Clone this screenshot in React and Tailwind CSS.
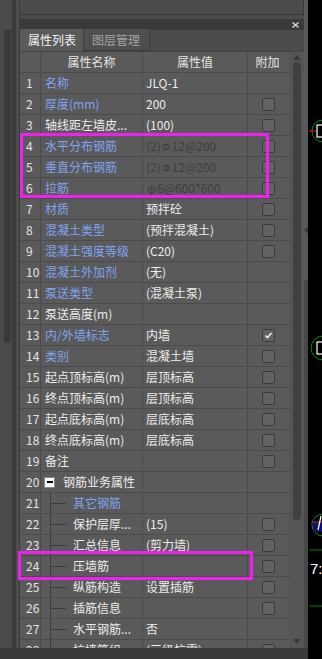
import React from 'react';

const F = { fontFamily: '"Noto Sans CJK SC", "Liberation Sans", sans-serif' };

const Rebar = ({ k }) => (
  <span className="text-[11px] mx-[1px]">{k === 'a' ? 'Φ' : 'ф'}</span>
);

const rows = [
  { n: 1, name: '名称', val: 'JLQ-1', blue: true, cb: false },
  { n: 2, name: '厚度(mm)', val: '200', blue: true, cb: true },
  { n: 3, name: '轴线距左墙皮...', val: '(100)', blue: false, cb: true },
  { n: 4, name: '水平分布钢筋', val: <>(2)<Rebar k="a" />12@200</>, blue: true, cb: true, dim: true },
  { n: 5, name: '垂直分布钢筋', val: <>(2)<Rebar k="a" />12@200</>, blue: true, cb: true, dim: true },
  { n: 6, name: '拉筋', val: <><Rebar k="b" />6@600*600</>, blue: true, cb: true, dim: true },
  { n: 7, name: '材质', val: '预拌砼', blue: true, cb: true },
  { n: 8, name: '混凝土类型', val: '(预拌混凝土)', blue: true, cb: true },
  { n: 9, name: '混凝土强度等级', val: '(C20)', blue: true, cb: true },
  { n: 10, name: '混凝土外加剂', val: '(无)', blue: true, cb: false },
  { n: 11, name: '泵送类型', val: '(混凝土泵)', blue: true, cb: false },
  { n: 12, name: '泵送高度(m)', val: '', blue: false, cb: false },
  { n: 13, name: '内/外墙标志', val: '内墙', blue: true, cb: true, checked: true },
  { n: 14, name: '类别', val: '混凝土墙', blue: true, cb: true },
  { n: 15, name: '起点顶标高(m)', val: '层顶标高', cb: true },
  { n: 16, name: '终点顶标高(m)', val: '层顶标高', cb: true },
  { n: 17, name: '起点底标高(m)', val: '层底标高', cb: true },
  { n: 18, name: '终点底标高(m)', val: '层底标高', cb: true },
  { n: 19, name: '备注', val: '', cb: true },
  { n: 20, name: '钢筋业务属性', val: '', cb: false, group: true },
  { n: 21, name: '其它钢筋', val: '', blue: true, cb: false, child: true },
  { n: 22, name: '保护层厚...', val: '(15)', cb: true, child: true },
  { n: 23, name: '汇总信息', val: '(剪力墙)', cb: true, child: true },
  { n: 24, name: '压墙筋', val: '', cb: true, child: true },
  { n: 25, name: '纵筋构造', val: '设置插筋', cb: true, child: true },
  { n: 26, name: '插筋信息', val: '', cb: true, child: true },
  { n: 27, name: '水平钢筋...', val: '否', cb: false, child: true },
  { n: 28, name: '拉墙筋组', val: '(三级抗震)', cb: true, child: true },
];

const Check = ({ checked }) => (
  <div className="w-[13px] h-[13px] rounded-[2px] border border-[#3a3a3a] bg-[#626262] flex items-center justify-center">
    {checked && (
      <svg width="9" height="9" viewBox="0 0 9 9">
        <path d="M1.5 4.5 L3.5 6.5 L7.5 2" stroke="#f0f0f0" strokeWidth="1.6" fill="none" />
      </svg>
    )}
  </div>
);

const Row = ({ r }) => {
  const nameColor = r.blue ? 'text-[#7fa4f2]' : 'text-[#ececec]';
  const valColor = r.dim ? 'text-[#3e3e3e]' : 'text-[#ececec]';
  return (
    <div className="grid grid-cols-[21px_102px_105px_41px] h-[21px] border-b border-[#4b4b4b] text-[12px] leading-[20px]">
      <div className="border-r border-[#4b4b4b] text-[#e4e4e4] pl-[6px]">{r.n}</div>
      <div className={`relative border-r border-[#4b4b4b] whitespace-nowrap overflow-hidden ${nameColor}`}>
        {r.group && (
          <div className="flex items-center h-full">
            <div className="ml-[3px] w-[11px] h-[11px] bg-white border border-[#888] flex items-center justify-center">
              <div className="w-[6px] h-[2px] bg-black" />
            </div>
            <span className="ml-[8px] text-[#ececec]">{r.name}</span>
          </div>
        )}
        {r.child && (
          <>
            <div className="absolute left-[9px] top-0 bottom-[-1px] w-px bg-[#3c3c3c]" />
            <div className="absolute left-[9px] top-[10px] w-[16px] h-px bg-[#3c3c3c]" />
            <span className="pl-[32px]">{r.name}</span>
          </>
        )}
        {!r.group && !r.child && <span className="pl-[4px]">{r.name}</span>}
      </div>
      <div className={`border-r border-[#4b4b4b] pl-[3px] whitespace-nowrap overflow-hidden ${valColor}`}>{r.val}</div>
      <div className="flex items-center justify-center">{r.cb && <Check checked={r.checked} />}</div>
    </div>
  );
};

export default function App() {
  return (
    <div className="relative w-[322px] h-[659px] overflow-hidden flex bg-black" style={F}>
      <div className="w-[308px] h-full flex flex-col bg-[#4a4a4a]">
        <div className="flex-1 flex min-h-0">
          {/* left strip */}
          <div className="w-[20px] flex">
            <div className="w-[12px] bg-[#4a4a4a] relative">
              <div className="absolute left-[4px] top-[30px] w-[7px] h-[313px] rounded-b-full bg-[#3a3a3a]" />
            </div>
            <div className="w-[4px] bg-[#3b3b3b]" />
            <div className="w-[3px] bg-[#4d4d4d]" />
            <div className="w-[1px] bg-[#3a3a3a]" />
          </div>
          {/* panel */}
          <div className="w-[284px] flex flex-col">
            <div className="h-[15px] bg-[#4b4b4b] border-b border-r border-[#393939]" />
            <div className="h-[4px]" />
            <div className="h-[11px] bg-[#3a3a3a] flex items-center justify-end pr-[5px]">
              <svg width="7" height="6" viewBox="0 0 7 6">
                <path d="M0.5 0.5 L6.5 5.5 M6.5 0.5 L0.5 5.5" stroke="#d8d8d8" strokeWidth="1.4" />
              </svg>
            </div>
            <div className="h-[22px] bg-[#4b4b4b] flex items-end border-b border-[#444]">
              <div className="w-[64px] h-[22px] bg-[#5a5a5a] text-[#f2f2f2] text-[12px] leading-[22px] pl-[8px] border-r border-[#3c3c3c]">属性列表</div>
              <div className="w-[66px] h-[22px] bg-[#4f4f4f] text-[#a4a4a4] text-[12px] leading-[22px] pl-[8px] border-r border-[#3c3c3c] border-b">图层管理</div>
            </div>
            <div className="flex-1 flex min-h-0">
              <div className="w-[269px] bg-[#5a5a5a] overflow-hidden">
                <div className="grid grid-cols-[21px_102px_105px_41px] h-[21px] border-b border-[#4b4b4b] text-[12px] leading-[20px] text-[#e4e4e4]">
                  <div className="border-r border-[#4b4b4b]" />
                  <div className="border-r border-[#4b4b4b] text-center">属性名称</div>
                  <div className="border-r border-[#4b4b4b] text-center">属性值</div>
                  <div className="text-center pr-[2px]">附加</div>
                </div>
                {rows.map((r) => (
                  <Row key={r.n} r={r} />
                ))}
              </div>
              <div className="w-[15px] bg-[#555555] flex flex-col items-center relative">
                <svg className="mt-[3px]" width="8" height="5" viewBox="0 0 8 5">
                  <path d="M0 5 L4 0 L8 5 Z" fill="#3a3a3a" />
                </svg>
                <div className="mt-[2px] w-[8px] h-[458px] rounded-full bg-[#404040]" />
                <svg className="absolute bottom-[4px]" width="8" height="5" viewBox="0 0 8 5">
                  <path d="M0 0 L8 0 L4 5 Z" fill="#3a3a3a" />
                </svg>
              </div>
            </div>
          </div>
          {/* splitter */}
          <div className="w-[4px] flex flex-col">
            <div className="h-[280px] bg-[#595959] relative">
              <svg className="absolute left-0 top-[226px]" width="4" height="8" viewBox="0 0 4 8">
                <path d="M4 0 L0 4 L4 8 Z" fill="#3a3a3a" />
              </svg>
            </div>
            <div className="flex-1 bg-[#484848]" />
          </div>
        </div>
        <div className="h-[11px] bg-[#3a3a3a]" />
      </div>
      {/* canvas */}
      <div className="flex-1 relative">
        <svg width="14" height="659" viewBox="308 0 14 659" className="block">
          <circle cx="323" cy="131" r="11" stroke="#0f8a0f" strokeWidth="1" fill="none" />
          <line x1="309" y1="131" x2="316" y2="131" stroke="#e02020" strokeWidth="1" />
          <rect x="317" y="125" width="6" height="12" fill="none" stroke="#ffffff" strokeWidth="1.2" />
          <circle cx="323" cy="348" r="12" stroke="#0f8a0f" strokeWidth="1" fill="none" />
          <rect x="317" y="342" width="6" height="12" fill="none" stroke="#ffffff" strokeWidth="1.2" />
          <circle cx="323" cy="525" r="11" stroke="#0f8a0f" strokeWidth="1" fill="none" />
          <path d="M312 522 L322 522 L322 532 L314 532 Z" fill="#101070" />
          <line x1="311" y1="522" x2="322" y2="522" stroke="#d02020" strokeWidth="1" />
          <path d="M318 530 L321 516" stroke="#ffffff" strokeWidth="1.2" />
          <line x1="309" y1="550" x2="322" y2="550" stroke="#0f7a0f" strokeWidth="1" />
          <line x1="309" y1="606" x2="322" y2="606" stroke="#0f7a0f" strokeWidth="1" />
        </svg>
        <div className="absolute left-[2px] top-[560px] text-white text-[15px] leading-[18px]" style={{ fontFamily: '"Liberation Sans", sans-serif' }}>7:</div>
      </div>
      {/* annotation boxes */}
      <div className="absolute left-[20px] top-[133px] w-[249px] h-[65px] border-[3px] border-[#f020f0]" />
      <div className="absolute left-[18px] top-[551px] w-[235px] h-[29px] border-[3px] border-[#f020f0]" />
    </div>
  );
}
